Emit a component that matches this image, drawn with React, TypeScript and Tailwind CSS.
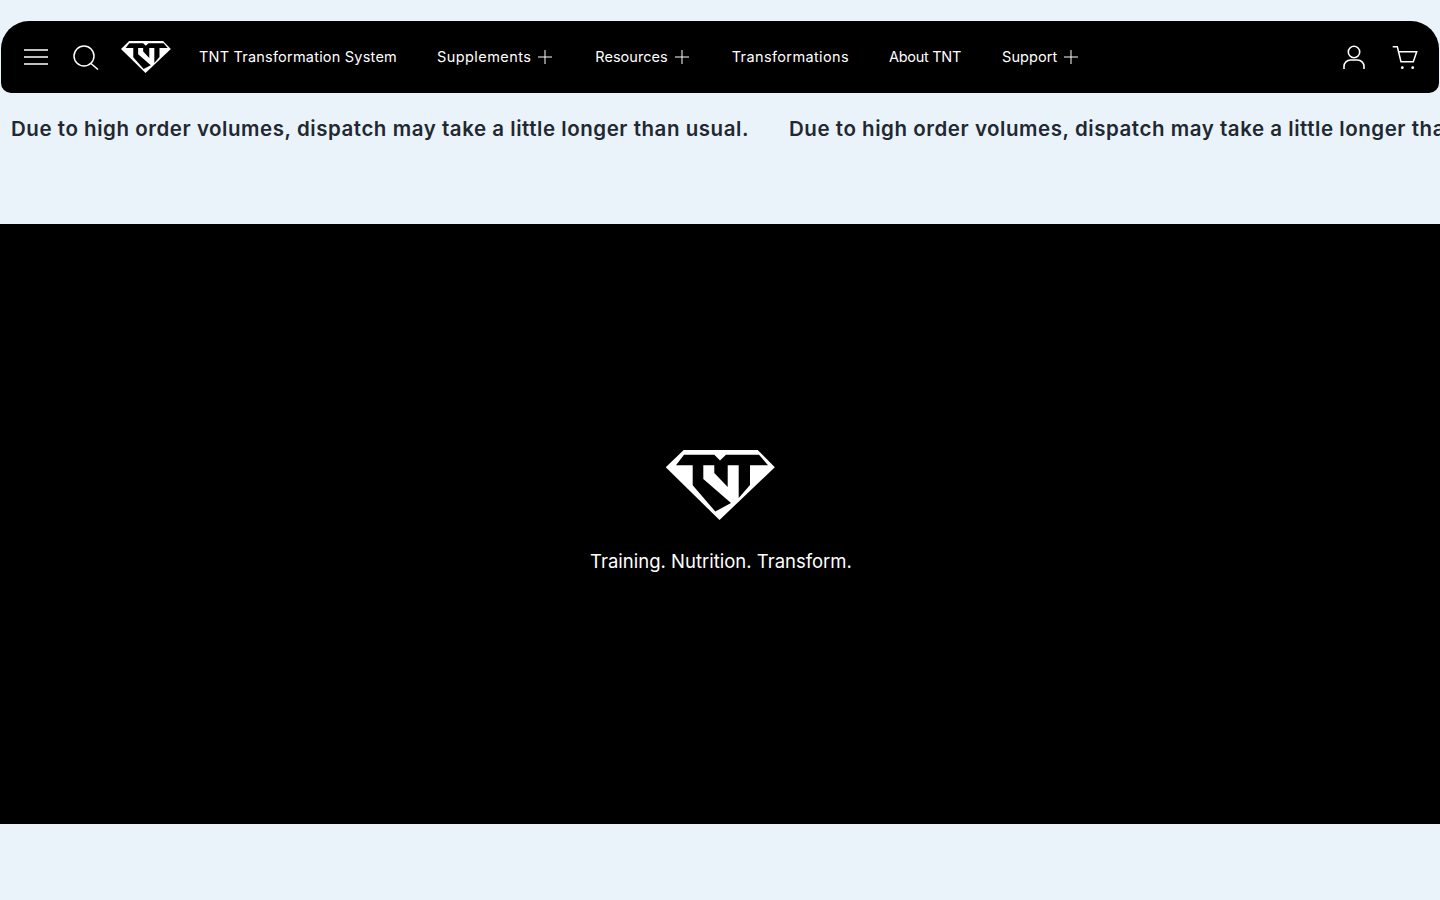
function Logo({ className }: { className: string }) {
  return (
    <svg viewBox="665 450 109 70" className={className}>
      <path d="M682.7 450H756.7L773.8 467.3L718.5 520L664.8 467.3Z" fill="#fff" />
      <path
        d="M683 454.7H713.3L719 460.5L725 454.7H758L767 465.3H749V485L737.7 498V465.3H726.7V487L713.3 473V465.3H702.3V479L730 503L714.3 511.5L691.7 485.3V465.3H675Z"
        fill="#000"
      />
    </svg>
  );
}

function PlusIcon() {
  return (
    <svg viewBox="0 0 14 14" className="w-[14px] h-[14px]" stroke="currentColor" strokeWidth="1">
      <path d="M7 0V14M0 7H14" />
    </svg>
  );
}

function NavLink({ label, plus, className }: { label: string; plus?: boolean; className: string }) {
  return (
    <a className={`flex items-center gap-[7px] text-[14.5px] leading-[22px] text-white whitespace-nowrap ${className}`}>
      {label}
      {plus && <PlusIcon />}
    </a>
  );
}

const notice = 'Due to high order volumes, dispatch may take a little longer than usual.';

export default function App() {
  return (
    <div className="min-h-[900px] bg-[#eaf3f9] overflow-hidden font-['Inter',sans-serif]">
      <div className="pt-[21px] px-px">
        <header className="h-[72px] bg-black rounded-t-[28px] rounded-b-[10px] flex items-center pl-[23px] pr-[21px] text-white">
          {/* Menu */}
          <svg viewBox="0 0 24 16" className="w-[24px] h-[16px]" stroke="currentColor" strokeWidth="1.4">
            <path d="M0 1H24M0 8H24M0 15H24" />
          </svg>
          {/* Search */}
          <svg viewBox="0 0 26 26" className="w-[26px] h-[26px] ml-[25px]" fill="none" stroke="currentColor" strokeWidth="1.5">
            <circle cx="11" cy="12" r="10" />
            <path d="M18 19.5L25 25.5" />
          </svg>
          <Logo className="w-[50px] h-[32px] ml-[22px]" />
          <nav className="flex items-center gap-[40px] ml-[28px]">
            <NavLink label="TNT Transformation System" className="tracking-[0.21px]" />
            <NavLink label="Supplements" plus className="tracking-[0.43px] mr-[3px]" />
            <NavLink label="Resources" plus className="tracking-[0.03px] mr-[3px]" />
            <NavLink label="Transformations" className="tracking-[0.38px]" />
            <NavLink label="About TNT" className="tracking-[-0.3px] mr-px" />
            <NavLink label="Support" plus className="tracking-[0.1px]" />
          </nav>
          <div className="ml-auto flex items-center gap-[27px]">
            {/* Account */}
            <svg viewBox="0 0 22 24" className="w-[22px] h-[24px]" fill="none" stroke="currentColor" strokeWidth="1.6">
              <circle cx="11" cy="7" r="5.7" />
              <path d="M1 24V21.5A6.5 6.5 0 0 1 7.5 15H14.5A6.5 6.5 0 0 1 21 21.5V24" />
            </svg>
            {/* Cart */}
            <svg viewBox="0 0 26 25" className="w-[26px] h-[25px]" fill="none" stroke="currentColor" strokeWidth="1.5">
              <path d="M0.7 1.7H5.3L9 16.7H21.3L24.7 6.7H6.3" />
              <circle cx="10.3" cy="22.7" r="1.4" fill="currentColor" stroke="none" />
              <circle cx="20.7" cy="22.7" r="1.4" fill="currentColor" stroke="none" />
            </svg>
          </div>
        </header>
      </div>

      <div className="h-[131px] pt-[21px] pl-[11px] flex gap-[40px] whitespace-nowrap text-[20.5px] leading-[30px] tracking-[0.54px] font-semibold text-[#222831]">
        <span>{notice}</span>
        <span>{notice}</span>
      </div>

      <section className="h-[600px] pb-[23px] bg-black flex flex-col items-center justify-center text-white">
        <Logo className="w-[109px] h-[70px]" />
        <p className="mt-[27px] ml-[2px] text-[18.5px] leading-[28px]">Training. Nutrition. Transform.</p>
      </section>
    </div>
  );
}
